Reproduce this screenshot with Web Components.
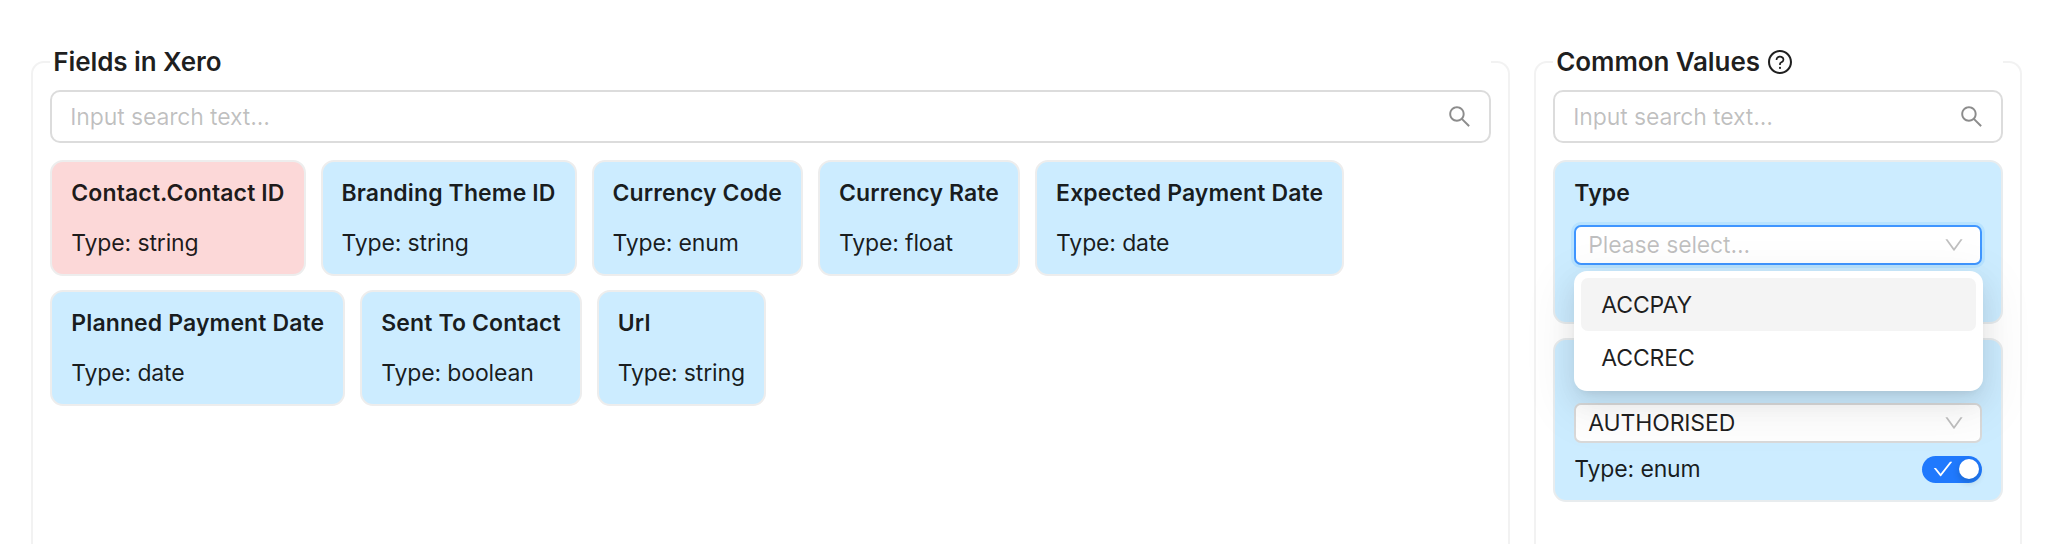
<!DOCTYPE html>
<html lang="en">
<head>
<meta charset="utf-8">
<title>Field mapping</title>
<style>
body{
    margin:0;
    height:544px;
    overflow:hidden;
    background:#fff;
    color:rgba(0,0,0,.88);
    font:23px/36px Inter,"Liberation Sans",sans-serif;
    letter-spacing:-.14px;
}
main{
    display:flex;
    gap:24px;
    padding:41px 0 0 31.3px;
}
field-panel.fields{
    width:1479px;
}
field-panel.values{
    width:487.6px;
}
.cards{
    display:flex;
    flex-wrap:wrap;
    gap:14px 15px;
}
.stack{
    display:flex;
    flex-direction:column;
    gap:15px;
}
</style>
</head>
<body>
<main>
    <field-panel class="fields">
        <span slot="title">Fields in Xero</span>
        <search-input placeholder="Input search text..."></search-input>
        <div class="cards">
            <field-card name="Contact.Contact ID" type="string" required></field-card>
            <field-card name="Branding Theme ID" type="string"></field-card>
            <field-card name="Currency Code" type="enum"></field-card>
            <field-card name="Currency Rate" type="float"></field-card>
            <field-card name="Expected Payment Date" type="date"></field-card>
            <field-card name="Planned Payment Date" type="date"></field-card>
            <field-card name="Sent To Contact" type="boolean"></field-card>
            <field-card name="Url" type="string"></field-card>
        </div>
    </field-panel>
    <field-panel class="values">
        <span slot="title">Common Values</span>
        <ui-icon slot="title" name="question" style="--size:24px"></ui-icon>
        <search-input placeholder="Input search text..."></search-input>
        <div class="stack">
            <value-card>
                <span slot="name">Type</span>
                <select-box placeholder="Please select..." open>
                    <select-option active>ACCPAY</select-option>
                    <select-option>ACCREC</select-option>
                </select-box>
            </value-card>
            <value-card>
                <select-box value="AUTHORISED"></select-box>
                <span slot="type">Type: enum</span>
                <toggle-switch slot="type"></toggle-switch>
            </value-card>
        </div>
    </field-panel>
</main>

<template id="field-panel">
<style>
:host{
    display:block;
    height:503px;
}
fieldset{
    box-sizing:border-box;
    height:100%;
    margin:0;
    padding:7px 17px 0;
    border:2px solid #f2f2f2;
    border-bottom:none;
    border-radius:13px 13px 0 0;
}
legend{
    box-sizing:border-box;
    display:flex;
    align-items:center;
    gap:8px;
    width:100%;
    height:42px;
    padding:0 3px;
    font-size:26px;
    font-weight:600;
    letter-spacing:-.1px;
}
.content{
    display:flex;
    flex-direction:column;
    gap:17px;
}
</style>
<fieldset>
    <legend><slot name="title"></slot></legend>
    <div class="content"><slot></slot></div>
</fieldset>
</template>

<template id="search-input">
<style>
:host{
    box-sizing:border-box;
    display:flex;
    align-items:center;
    justify-content:space-between;
    height:53px;
    padding:0 18px;
    border:2px solid #dcdcdc;
    border-radius:10px;
}
span{
    color:rgba(0,0,0,.25);
}
ui-icon{
    --size:23px;
    color:rgba(0,0,0,.45);
}
</style>
<span></span>
<ui-icon name="search"></ui-icon>
</template>

<template id="field-card">
<style>
:host{
    box-sizing:border-box;
    display:flex;
    flex-direction:column;
    gap:14px;
    height:116px;
    padding:13px 19px;
    border:2px solid #ededed;
    border-radius:13px;
    background:#ccecff;
}
:host([required]){
    background:#fcd8d8;
}
b{
    font-weight:600;
    letter-spacing:.12px;
}
</style>
<b></b>
<span></span>
</template>

<template id="value-card">
<style>
:host{
    box-sizing:border-box;
    display:grid;
    grid-template-rows:36px 39px 36px;
    gap:14px 0;
    height:164px;
    padding:13px 19px;
    border:2px solid #e8ecee;
    border-radius:13px;
    background:#ccecff;
}
:host(:not(:first-child)){
    margin-top:-1px;
}
b{
    font-weight:600;
    letter-spacing:.12px;
}
.foot{
    display:flex;
    align-items:center;
    justify-content:space-between;
    margin-top:-10px;
}
</style>
<b><slot name="name"></slot></b>
<slot></slot>
<div class="foot"><slot name="type"></slot></div>
</template>

<template id="select-box">
<style>
:host{
    position:relative;
    box-sizing:border-box;
    display:flex;
    align-items:center;
    justify-content:space-between;
    height:40px;
    padding:0 16px 0 12px;
    border:2px solid #d9d9d9;
    border-radius:7px;
    background:#fff;
}
:host([open]){
    z-index:1;
    border-color:#4096ff;
    box-shadow:0 0 0 3px rgba(5,145,255,.1);
}
.placeholder{
    color:rgba(0,0,0,.25);
}
ui-icon{
    --size:20px;
    color:rgba(0,0,0,.25);
}
.menu{
    display:none;
    position:absolute;
    top:44px;
    left:-2px;
    right:-3px;
    padding:7px;
    border-radius:13px;
    background:#fff;
    box-shadow:0 10px 26px 0 rgba(0,0,0,.08),0 5px 10px -6px rgba(0,0,0,.12),0 15px 46px 13px rgba(0,0,0,.05);
}
:host([open]) .menu{
    display:block;
}
</style>
<span class="text"></span>
<ui-icon name="down"></ui-icon>
<div class="menu"><slot></slot></div>
</template>

<template id="select-option">
<style>
:host{
    display:flex;
    align-items:center;
    height:53px;
    padding:0 20px;
    border-radius:7px;
}
:host([active]){
    background:#f4f4f4;
}
</style>
<slot></slot>
</template>

<template id="toggle-switch">
<style>
:host{
    box-sizing:border-box;
    display:flex;
    align-items:center;
    justify-content:space-between;
    width:60px;
    height:27px;
    padding:0 3px 0 11px;
    border-radius:14px;
    background:#2079fd;
    color:#fff;
}
ui-icon{
    --size:20px;
}
i{
    width:20px;
    height:20px;
    border-radius:50%;
    background:#fff;
    box-shadow:0 3px 7px rgba(0,35,11,.2);
}
</style>
<ui-icon name="check"></ui-icon>
<i></i>
</template>

<script>
const icons = {
  search: 'M909.6 854.5L649.9 594.8C690.2 542.7 712 479 712 412c0-80.2-31.3-155.4-87.9-212.1-56.6-56.7-132-87.9-212.1-87.9s-155.5 31.3-212.1 87.9C143.2 256.5 112 331.8 112 412c0 80.1 31.3 155.5 87.9 212.1C256.5 680.8 331.8 712 412 712c67 0 130.6-21.8 182.7-62l259.7 259.6a8.2 8.2 0 0011.6 0l43.6-43.5a8.2 8.2 0 000-11.6zM570.4 570.4C528 612.7 471.8 636 412 636s-116-23.3-158.4-65.6C211.3 528 188 471.8 188 412s23.3-116.1 65.6-158.4C296 211.3 352.2 188 412 188s116.1 23.2 158.4 65.6S636 352.2 636 412s-23.3 116.1-65.6 158.4z',
  down: 'M884 256h-75c-5.1 0-9.9 2.5-12.9 6.6L512 654.2 227.9 262.6c-3-4.1-7.8-6.6-12.9-6.6h-75c-6.5 0-10.3 7.4-6.5 12.7l352.6 486.1c12.8 17.6 39 17.6 51.7 0l352.6-486.1c3.9-5.3.1-12.7-6.4-12.7z',
  check: 'M912 190h-69.9c-9.8 0-19.1 4.5-25.1 12.2L404.7 724.5 207 474a32 32 0 00-25.1-12.2H112c-6.7 0-10.4 7.7-6.3 12.9l273.9 347c12.8 16.2 37.4 16.2 50.3 0l488.4-618.9c4.1-5.1.4-12.8-6.3-12.8z',
  question: 'M512 64C264.6 64 64 264.6 64 512s200.6 448 448 448 448-200.6 448-448S759.4 64 512 64zm0 820c-205.4 0-372-166.6-372-372s166.6-372 372-372 372 166.6 372 372-166.6 372-372 372zM623.6 316.7C593.6 290.4 554 276 512 276s-81.6 14.5-111.6 40.7C369.2 344 352 380.7 352 420v7.6c0 4.4 3.6 8 8 8h48c4.4 0 8-3.6 8-8V420c0-44.1 43.1-80 96-80s96 35.9 96 80c0 31.1-22 59.6-56.1 72.7-21.2 8.1-39.2 22.3-52.1 40.9-13.1 19-19.9 41.8-19.9 64.9V620c0 4.4 3.6 8 8 8h48c4.4 0 8-3.6 8-8v-22.7a48.3 48.3 0 0130.9-44.8c59-22.7 97.1-74.7 97.1-132.5.1-39.3-17.1-76-48.3-103.3zM472 732a40 40 0 1080 0 40 40 0 10-80 0z'
};

class BaseElement extends HTMLElement {
  constructor() {
    super();
    const root = this.attachShadow({mode: 'open'});
    const temp = document.querySelector('#' + this.localName);
    root.appendChild(temp.content.cloneNode(true));
  }
}

customElements.define('ui-icon',
  class extends HTMLElement {
    constructor() {
      super();
      this.attachShadow({mode: 'open'});
    }
    connectedCallback() {
      this.shadowRoot.innerHTML = `
        <style>
          :host{display:block;flex:none;width:var(--size,20px);height:var(--size,20px);}
          svg{display:block;width:100%;height:100%;}
        </style>
        <svg viewBox="64 64 896 896" fill="currentColor"><path d="${icons[this.getAttribute('name')]}"/></svg>`;
    }
  }
);

customElements.define('field-panel', class extends BaseElement {});
customElements.define('value-card', class extends BaseElement {});
customElements.define('select-option', class extends BaseElement {});
customElements.define('toggle-switch', class extends BaseElement {});

customElements.define('search-input',
  class extends BaseElement {
    connectedCallback() {
      this.shadowRoot.querySelector('span').textContent = this.getAttribute('placeholder');
    }
  }
);

customElements.define('field-card',
  class extends BaseElement {
    connectedCallback() {
      this.shadowRoot.querySelector('b').textContent = this.getAttribute('name');
      this.shadowRoot.querySelector('span').textContent = 'Type: ' + this.getAttribute('type');
    }
  }
);

customElements.define('select-box',
  class extends BaseElement {
    connectedCallback() {
      const text = this.shadowRoot.querySelector('.text');
      const value = this.getAttribute('value');
      text.textContent = value || this.getAttribute('placeholder');
      text.classList.toggle('placeholder', !value);
    }
  }
);
</script>
</body>
</html>
